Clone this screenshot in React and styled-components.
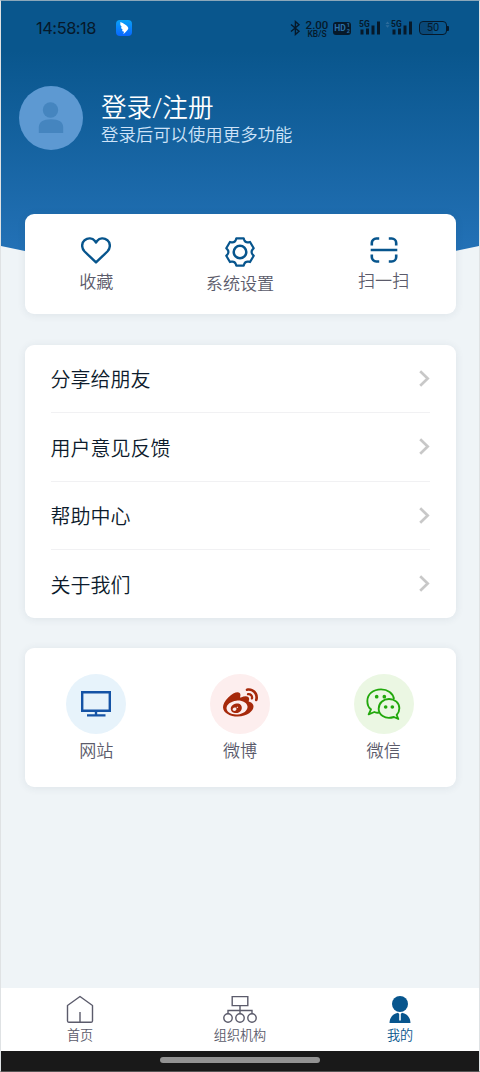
import React from "react";
import styled, { createGlobalStyle } from "styled-components";
import { FaWeibo } from "react-icons/fa";

const theme = {
  primary: "#07558d",
  background: "#eff4f7",
  card: "#ffffff",
  text: "#0d1b2c",
  label: "#5b5b6b",
  divider: "#f1f1f3",
  chevron: "#c8c8c8",
  status: "#06192a"
};

const GlobalStyle = createGlobalStyle`
  * {
    box-sizing: border-box;
  }
  body {
    margin: 0;
    font-family: Roboto, "Noto Sans CJK SC", sans-serif;
    font-weight: 350;
  }
  svg {
    display: block;
    flex: none;
  }
`;

const Styled = styled.div`
  width: 480px;
  height: 1072px;
  display: flex;
  flex-direction: column;
  background: ${theme.background};
  border: 1px solid #dfe2e4;
  border-top-color: #8ba7ba;
  border-bottom-color: #555;
  overflow: hidden;
`;

const Header = styled.div`
  flex: none;
  height: 299px;
  color: #fff;
  background: linear-gradient(#09568d 0, #09568d 50px, #2371b6 250px);
  clip-path: polygon(0 0, 100% 0, 100% 245px, 50% 295px, 0 245px);
`;

const StatusBar = styled.div`
  display: flex;
  align-items: center;
  justify-content: space-between;
  height: 54px;
  padding: 0 30px 0 35px;
  color: ${theme.status};
`;

const StatusGroup = styled.div`
  display: flex;
  align-items: center;
`;

const Clock = styled.div`
  width: 80px;
  font: 16.4px/20px Inter, sans-serif;
  letter-spacing: -0.45px;
  white-space: nowrap;
`;

const Speed = styled.div`
  width: 24px;
  margin: 1px 4px 0 4px;
  text-align: center;
  font: 500 11.5px/10px Roboto, sans-serif;
  white-space: nowrap;
`;

const SpeedUnit = styled.div`
  font-size: 8.5px;
  line-height: 8px;
`;

const HdBadge = styled.div`
  display: flex;
  align-items: center;
  justify-content: center;
  width: 18px;
  height: 13px;
  margin-right: 8px;
  border-radius: 3px;
  background: ${theme.status};
  color: #2a70a8;
  font: 700 8.5px/13px Roboto, sans-serif;
`;

const HdLines = styled.div`
  margin-left: 1px;
  font-size: 5.5px;
  line-height: 6px;
`;

const Battery = styled.div`
  display: flex;
  align-items: center;
  margin-left: 7px;
  &::after {
    content: "";
    width: 2px;
    height: 5px;
    border-radius: 0 1px 1px 0;
    background: ${theme.status};
  }
`;

const BatteryBody = styled.div`
  width: 28px;
  height: 14px;
  border: 1px solid ${theme.status};
  border-radius: 4px;
  background: linear-gradient(90deg, #0a4878 50%, transparent 50%);
  text-align: center;
  font: 11px/12px Roboto, sans-serif;
`;

const Profile = styled.div`
  display: flex;
  align-items: center;
  height: 64px;
  margin: 30.5px 0 0 18px;
`;

const Avatar = styled.div`
  display: flex;
  align-items: center;
  justify-content: center;
  width: 64px;
  height: 64px;
  margin-right: 18px;
  border-radius: 50%;
  background: #5d99d2;
`;

const ProfileTitle = styled.div`
  font-size: 25.6px;
  line-height: 32px;
  margin-top: 3px;
`;

const ProfileHint = styled.div`
  font-size: 17.4px;
  line-height: 22px;
  color: #cfe3f8;
`;

const Card = styled.div`
  flex: none;
  position: relative;
  display: flex;
  height: ${props => props.$height}px;
  margin: ${props => props.$top}px 23.5px 0;
  border-radius: 9px;
  background: ${theme.card};
  box-shadow: 0 1px 8px rgba(40, 70, 90, 0.09);
`;

const MenuCard = styled(Card)`
  flex-direction: column;
  padding: 0 26px;
`;

const Action = styled.div`
  flex: 1;
  display: flex;
  flex-direction: column;
  align-items: center;
  padding-top: ${props => props.$top}px;
`;

const Label = styled.div`
  margin-top: ${props => props.$gap}px;
  font-size: 17.1px;
  line-height: 24px;
  color: ${theme.label};
`;

const MenuRow = styled.div`
  flex: 1;
  display: flex;
  align-items: center;
  justify-content: space-between;
  color: ${theme.text};
  font-size: 20px;
  & + & {
    border-top: 1px solid ${theme.divider};
  }
`;

const MenuText = styled.div`
  padding-top: 1px;
`;

const Bubble = styled.div`
  display: flex;
  align-items: center;
  justify-content: center;
  width: 60px;
  height: 60px;
  border-radius: 50%;
  background: ${props => props.$color};
`;

const TabBar = styled.div`
  flex: none;
  display: flex;
  height: 63px;
  margin: auto -1px 0;
  background: #fff;
`;

const Tab = styled.div`
  flex: 1;
  display: flex;
  flex-direction: column;
  align-items: center;
  padding-top: 7px;
  color: ${props => (props.$active ? theme.primary : theme.label)};
  font-size: 13.1px;
  line-height: 18px;
  svg {
    margin-bottom: 4px;
  }
`;

const HomeIndicator = styled.div`
  flex: none;
  display: flex;
  justify-content: center;
  height: 20px;
  padding-top: 6px;
  background: #191919;
  &::after {
    content: "";
    width: 160px;
    height: 6px;
    border-radius: 3px;
    background: #929292;
  }
`;

const AppBadge = () => (
  <svg width="16" height="16" viewBox="0 0 48 48">
    <defs>
      <linearGradient id="badge" x1="0" y1="0" x2="0" y2="1">
        <stop offset="0" stopColor="#0aa1f5" />
        <stop offset="1" stopColor="#0866ff" />
      </linearGradient>
    </defs>
    <rect width="48" height="48" rx="12" fill="url(#badge)" />
    <path d="M13 6C22 10 34 16 37 24C37 28 33 32 30 35L22 43L24 35L18 33L20 29L15 24L17 20L13 15Z" fill="#fff" />
  </svg>
);

const BluetoothIcon = () => (
  <svg width="11" height="16" viewBox="0 0 11 16" fill="none" stroke={theme.status} strokeWidth="1.4">
    <path d="M1 4.5L9 11.2L5.4 14.5V1.5L9 4.8L1 11.5" />
  </svg>
);

const SignalIcon = ({ roaming }) => (
  <svg width={roaming ? 32 : 21} height="16" viewBox={roaming ? "-11 0 32 16" : "0 0 21 16"} fill={theme.status}>
    {roaming && <path d="M-5.5 4L-3.5 1.5L-1.5 4ZM-5.5 5.2H-1.5L-3.5 7.7Z" fill="#2c6c9c" />}
    <text x="0" y="7" fontFamily="Roboto, sans-serif" fontSize="8.5" fontWeight="700">
      5G
    </text>
    <path d="M1.5 9.5H4.5V14.5H1.5ZM7 8.5H10V14.5H7ZM12.5 5.5H15.5V14.5H12.5ZM18 1.5H21V14.5H18Z" />
  </svg>
);

const PersonIcon = () => (
  <svg width="26" height="32" viewBox="0 0 26 32" fill="#4585bf">
    <circle cx="12.5" cy="8" r="7.7" />
    <path d="M0.8 31V25.5C0.8 20 5 17.2 13 17.2S25.2 20 25.2 25.5V31Z" />
  </svg>
);

const HeartIcon = () => (
  <svg width="30" height="27" viewBox="0 0 30 27" fill="none" stroke={theme.primary} strokeWidth="2.4" strokeLinejoin="round">
    <path d="M15 25.4L3.6 14.5C0.3 11.2 0.4 6 3.6 3.2C7 0.4 11.4 1 13.7 3.8L15 5.5L16.3 3.8C18.6 1 23 0.4 26.4 3.2C29.6 6 29.7 11.2 26.4 14.5Z" />
  </svg>
);

const polar = (radius, degrees) => {
  const a = (degrees * Math.PI) / 180;
  return `${(15 + radius * Math.sin(a)).toFixed(2)} ${(15 - radius * Math.cos(a)).toFixed(2)}`;
};

// six flat teeth joined by inward curves
const gearPath =
  [0, 60, 120, 180, 240, 300]
    .map(
      (deg, i) =>
        `${i ? "L" : "M"}${polar(14.2, deg - 15)}L${polar(14.2, deg + 15)}L${polar(12.8, deg + 19)}Q${polar(10.6, deg + 30)} ${polar(12.8, deg + 41)}`
    )
    .join("") + "Z";

const GearIcon = () => (
  <svg width="30" height="31" viewBox="0 0 30 31" fill="none" stroke={theme.primary} strokeWidth="2.2" strokeLinejoin="round">
    <path d={gearPath} />
    <circle cx="15" cy="15" r="6.3" strokeWidth="2.5" />
  </svg>
);

const ScanIcon = () => (
  <svg width="28" height="26" viewBox="0 0 28 26" fill="none" stroke={theme.primary} strokeWidth="2.6">
    <path d="M1.8 8.5V6A4.5 4.5 0 0 1 6.3 1.5H9.2M18.8 1.5H21.7A4.5 4.5 0 0 1 26.2 6V8.5M26.2 17.5V20A4.5 4.5 0 0 1 21.7 24.5H18.8M9.2 24.5H6.3A4.5 4.5 0 0 1 1.8 20V17.5M0.7 13H27.3" />
  </svg>
);

const Chevron = () => (
  <svg width="11" height="17" viewBox="0 0 11 17" fill="none" stroke={theme.chevron} strokeWidth="2.7">
    <path d="M1.2 1.2L8.7 8.5L1.2 15.8" />
  </svg>
);

const MonitorIcon = () => (
  <svg width="30" height="26" viewBox="0 0 30 26" fill="none" stroke="#1553a5" strokeWidth="2.4">
    <path d="M1.2 1.2H28.8V19.8H1.2ZM15 20V24M6 24.4H24.5" />
  </svg>
);

const WechatIcon = () => (
  <svg width="35" height="32" viewBox="319 82 105 96" fill="none" stroke="#22a80c" strokeWidth="5.6" strokeLinejoin="round">
    <path d="M403 115C400 97 384 86 364 86C340 86 323 101 323 121C323 133 328 142 334 146L327 161L344 154C349 156 353 157 358 156" />
    <path d="M388 115C406 115 419 127 419 143C419 151 416 158 411 163L416 175L403 169C374 178 357 161 357 144C357 127 371 115 388 115Z" />
    <g fill="#22a80c" stroke="none">
      <circle cx="351" cy="108" r="5.5" />
      <circle cx="374" cy="108" r="5.5" />
      <circle cx="378" cy="139" r="5.5" />
      <circle cx="398" cy="139" r="5.5" />
    </g>
  </svg>
);

const HomeIcon = () => (
  <svg width="28" height="28" viewBox="0 0 28 28" fill="none" stroke={theme.label} strokeWidth="1.4" strokeLinejoin="round">
    <path d="M14 1.5L26.5 10.5V26A1.5 1.5 0 0 1 25 27.3H3A1.5 1.5 0 0 1 1.5 26V10.5ZM14 17V27.3" />
  </svg>
);

const OrgIcon = () => (
  <svg width="34" height="28" viewBox="0 0 34 28" fill="none" stroke={theme.label} strokeWidth="1.4">
    <path d="M9.2 1.6H24.8V10.6H9.2ZM17 10.6V19M5 19V15.5H29V19" />
    <circle cx="5" cy="23" r="4.2" />
    <circle cx="17" cy="23" r="4.2" />
    <circle cx="29" cy="23" r="4.2" />
  </svg>
);

const MineIcon = () => (
  <svg width="22" height="28" viewBox="0 0 22 28" fill={theme.primary}>
    <circle cx="11" cy="9" r="8" />
    <path d="M0.5 28C0.7 22.5 4 18.6 9 17.7L10.2 19V25.5H11.8V19L13 17.7C18 18.6 21.3 22.5 21.5 28Z" />
  </svg>
);

const menu = ["分享给朋友", "用户意见反馈", "帮助中心", "关于我们"];

class App extends React.Component {
  render() {
    return (
      <Styled>
        <GlobalStyle />
        <Header>
          <StatusBar>
            <StatusGroup>
              <Clock>14:58:18</Clock>
              <AppBadge />
            </StatusGroup>
            <StatusGroup>
              <BluetoothIcon />
              <Speed>
                <div>2.00</div>
                <SpeedUnit>KB/S</SpeedUnit>
              </Speed>
              <HdBadge>
                HD
                <HdLines>
                  <div>1</div>
                  <div>2</div>
                </HdLines>
              </HdBadge>
              <SignalIcon />
              <SignalIcon roaming />
              <Battery>
                <BatteryBody>50</BatteryBody>
              </Battery>
            </StatusGroup>
          </StatusBar>
          <Profile>
            <Avatar>
              <PersonIcon />
            </Avatar>
            <div>
              <ProfileTitle>登录/注册</ProfileTitle>
              <ProfileHint>登录后可以使用更多功能</ProfileHint>
            </div>
          </Profile>
        </Header>
        <Card $height={100} $top={-86}>
          <Action $top={22.5}>
            <HeartIcon />
            <Label $gap={6.5}>收藏</Label>
          </Action>
          <Action $top={23}>
            <GearIcon />
            <Label $gap={4}>系统设置</Label>
          </Action>
          <Action $top={23}>
            <ScanIcon />
            <Label $gap={6}>扫一扫</Label>
          </Action>
        </Card>
        <MenuCard $height={273} $top={30.5}>
          {menu.map(item => (
            <MenuRow key={item}>
              <MenuText>{item}</MenuText>
              <Chevron />
            </MenuRow>
          ))}
        </MenuCard>
        <Card $height={139} $top={30.5}>
          <Action $top={25.5}>
            <Bubble $color="#e7f3fb">
              <MonitorIcon />
            </Bubble>
            <Label $gap={5}>网站</Label>
          </Action>
          <Action $top={25.5}>
            <Bubble $color="#fdeeee">
              <FaWeibo size={35} color="#a6290b" />
            </Bubble>
            <Label $gap={5}>微博</Label>
          </Action>
          <Action $top={25.5}>
            <Bubble $color="#ebf7e3">
              <WechatIcon />
            </Bubble>
            <Label $gap={5}>微信</Label>
          </Action>
        </Card>
        <TabBar>
          <Tab>
            <HomeIcon />
            首页
          </Tab>
          <Tab>
            <OrgIcon />
            组织机构
          </Tab>
          <Tab $active>
            <MineIcon />
            我的
          </Tab>
        </TabBar>
        <HomeIndicator />
      </Styled>
    );
  }
}

export default App;
